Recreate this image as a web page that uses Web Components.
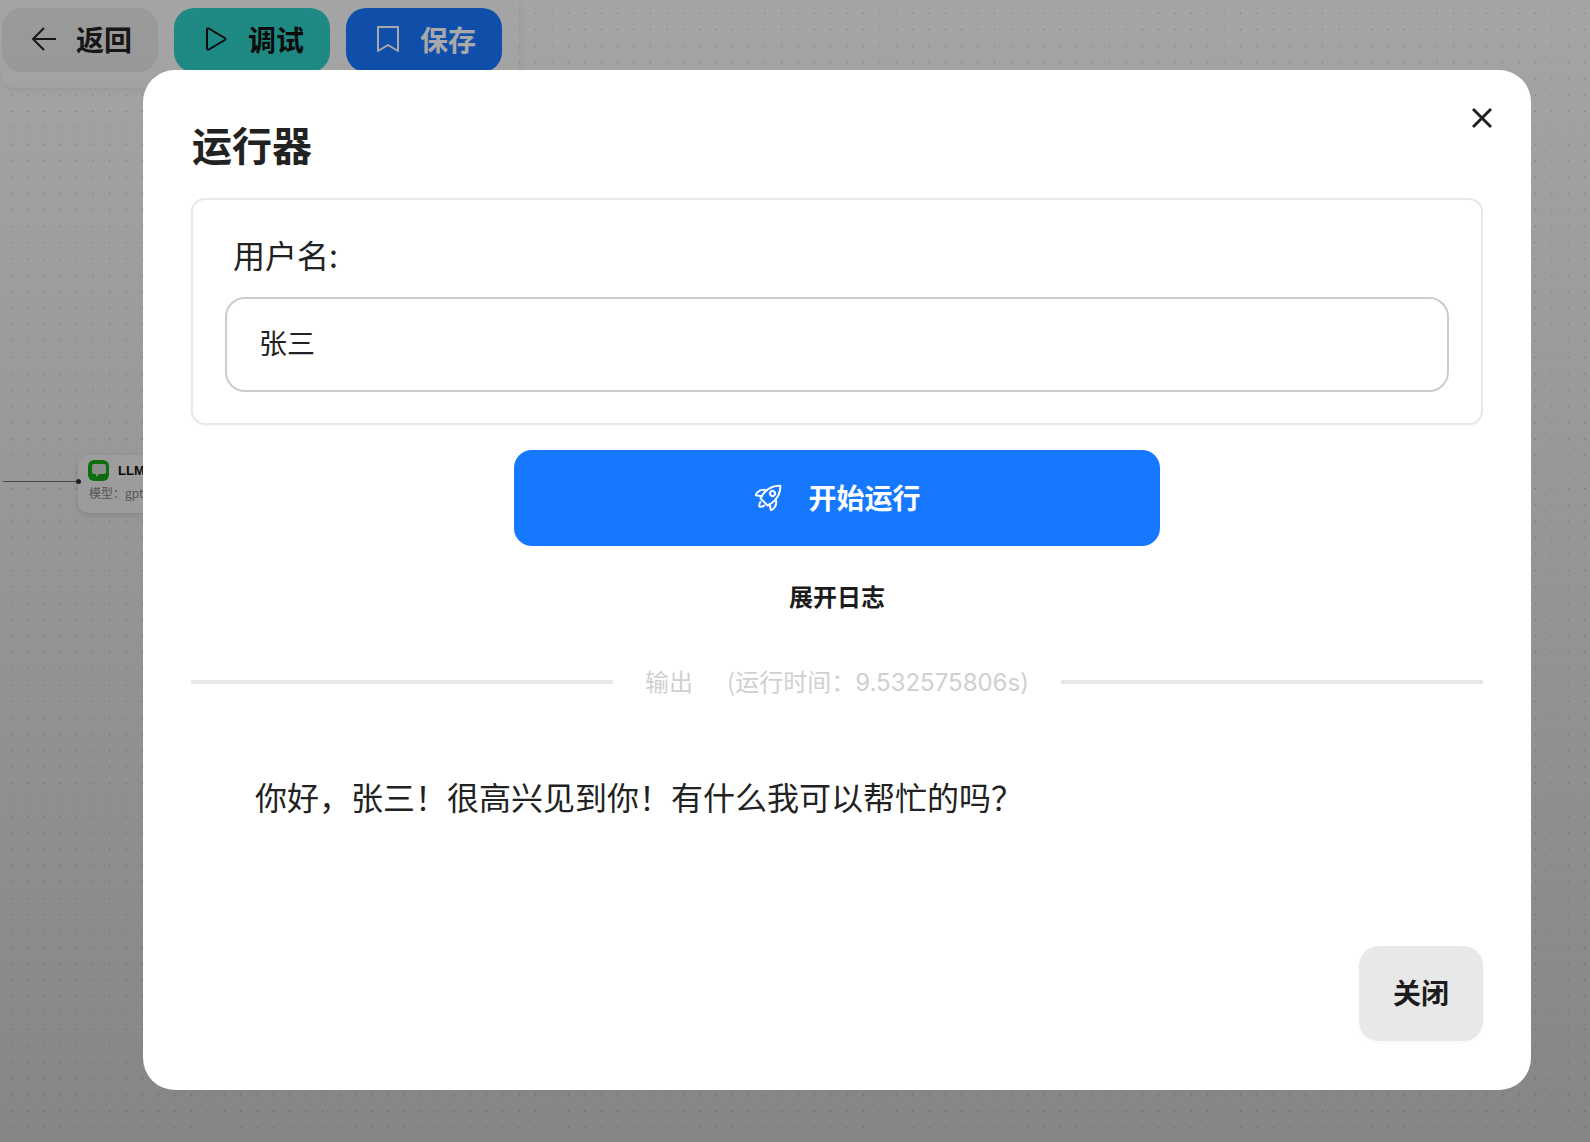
<!DOCTYPE html>
<html lang="zh">
<head>
<meta charset="utf-8">
<title>运行器</title>
<style>
  html, body { margin: 0; height: 100%; }
  body {
    font-family: "Noto Sans CJK SC", "Noto Sans", sans-serif;
    color: #222;
    overflow: hidden;
  }
</style>
</head>
<body>
<flow-page>
  <tool-button slot="tools" kind="back" icon="back">返回</tool-button>
  <tool-button slot="tools" kind="debug" icon="play">调试</tool-button>
  <tool-button slot="tools" kind="save" icon="mark">保存</tool-button>
  <flow-node slot="canvas"></flow-node>
  <run-modal slot="modal" heading="运行器">
    <field-card label="用户名:" value="张三"></field-card>
    <run-button>开始运行</run-button>
    <log-toggle>展开日志</log-toggle>
    <output-divider label="(运行时间：" time="9.532575806s)">输出</output-divider>
    <output-text>你好，张三！很高兴见到你！有什么我可以帮忙的吗？</output-text>
  </run-modal>
</flow-page>

<script>
const ICONS = {
  back: `<svg style="margin:0 -1px" width="26" height="26" viewBox="0 0 26 26" fill="none" stroke="currentColor" stroke-width="2"><path d="M25 13H2M13 2 2 13l11 11"/></svg>`,
  play: `<svg width="24" height="26" viewBox="0 0 24 26" fill="none" stroke="currentColor" stroke-width="2" stroke-linejoin="round"><path d="M3 3.500c0-1 1-1.500 1.800-1l16 9.500c.8.500.8 1.500 0 2l-16 9.500c-.8.500-1.800 0-1.800-1z"/></svg>`,
  mark: `<svg width="24" height="28" viewBox="0 0 24 28" fill="none" stroke="currentColor" stroke-width="2" stroke-linejoin="round"><path d="M2 2h20v24l-10-6-10 6z"/></svg>`
};

class FlowPage extends HTMLElement {
  constructor() {
    super();
    this.attachShadow({ mode: "open" });
    this.shadowRoot.innerHTML = `
      <style>
        :host {
          display: block;
          position: relative;
          width: 100%;
          height: 100%;
          overflow: hidden;
          background-color: #f7f7f8;
          background-image: radial-gradient(circle, #b4b4b4 0.7px, transparent 1px);
          background-size: 16.4px 16.4px;
          background-position: 3px 5px;
        }
        .toolbar {
          display: flex;
          gap: 16px;
          width: fit-content;
          padding: 8px 17px 16px 2px;
          background: #f7f7f7;
          border-radius: 0 0 16px 16px;
          box-shadow: 0 2px 8px rgba(0, 0, 0, .08);
        }
        .overlay {
          position: absolute;
          inset: 0;
          display: flex;
          padding: 70px 0 0 143px;
          background: linear-gradient(#00000055, #00000075);
        }
      </style>
      <div class="toolbar"><slot name="tools"></slot></div>
      <slot name="canvas"></slot>
      <div class="overlay"><slot name="modal"></slot></div>
    `;
  }
}

class ToolButton extends HTMLElement {
  constructor() {
    super();
    this.attachShadow({ mode: "open" });
    const kind = this.getAttribute("kind");
    const colors = {
      back: ["#e7e7e7", "#222"],
      debug: ["#2dcfc5", "#111"],
      save: ["#1677ff", "#fff"]
    }[kind];
    this.shadowRoot.innerHTML = `
      <style>
        :host {
          display: flex;
          align-items: center;
          gap: 20px;
          box-sizing: border-box;
          width: 156px;
          height: 64px;
          padding: 0 0 2px 30px;
          border-radius: 20px;
          font-size: 28px;
          font-weight: 700;
          background: ${colors[0]};
          color: ${colors[1]};
        }
        svg { display: block; }
      </style>
      ${ICONS[this.getAttribute("icon")]}
      <slot></slot>
    `;
  }
}

class FlowNode extends HTMLElement {
  constructor() {
    super();
    this.attachShadow({ mode: "open" });
    this.shadowRoot.innerHTML = `
      <style>
        :host { display: block; position: absolute; left: 3px; top: 455px; }
        .edge { position: absolute; left: 0; top: 26px; width: 75px; height: 1px; background: #777; }
        .dot { position: absolute; left: 73px; top: 24px; width: 5px; height: 5px; border-radius: 50%; background: #333; }
        .card {
          box-sizing: border-box;
          margin-left: 75px;
          width: 200px;
          height: 58px;
          padding: 5px 10px;
          background: #fff;
          border-radius: 10px;
          box-shadow: 0 2px 6px rgba(0, 0, 0, .12);
        }
        .title { display: flex; align-items: center; gap: 9px; font-size: 13px; font-weight: 700; color: #111; font-family: "Liberation Sans", sans-serif; }
        .badge { width: 21px; height: 21px; border-radius: 6px; background: #17b317; display: flex; align-items: center; justify-content: center; }
        .sub { margin: 3px 0 0 1px; font-size: 12px; color: #8a8a8a; }
      </style>
      <div class="edge"></div>
      <div class="dot"></div>
      <div class="card">
        <div class="title">
          <span class="badge"><svg width="14" height="13" viewBox="0 0 14 13"><path fill="#e4e4e4" d="M2 0h10a2 2 0 0 1 2 2v6a2 2 0 0 1-2 2H7l-3 3v-3H2a2 2 0 0 1-2-2V2a2 2 0 0 1 2-2z"/></svg></span>
          <span>LLM</span>
        </div>
        <div class="sub">模型：gpt</div>
      </div>
    `;
  }
}

class RunModal extends HTMLElement {
  constructor() {
    super();
    this.attachShadow({ mode: "open" });
    this.shadowRoot.innerHTML = `
      <style>
        :host {
          display: flex;
          flex-direction: column;
          position: relative;
          box-sizing: border-box;
          width: 1388px;
          height: 1020px;
          padding: 45px 48px 49px;
          background: #fff;
          border-radius: 32px;
        }
        h2 {
          margin: 0 0 25px 1px;
          font-size: 40px;
          line-height: 58px;
          font-weight: 700;
          color: #222;
        }
        .close {
          position: absolute;
          top: 37px;
          right: 38px;
          display: block;
        }
        .footer { margin-top: auto; display: flex; justify-content: flex-end; }
        .footer button {
          width: 124px;
          height: 95px;
          padding: 0 0 3px;
          border: 0;
          border-radius: 20px;
          background: #e7e8e8;
          color: #1c1c1c;
          font: 700 28px "Noto Sans CJK SC", sans-serif;
          box-shadow: 0 2px 4px rgba(0, 0, 0, .03);
        }
      </style>
      <svg class="close" width="22" height="22" viewBox="0 0 22 22" stroke="#222" stroke-width="3"><path d="M2 2l18 18M20 2 2 20"/></svg>
      <h2>${this.getAttribute("heading")}</h2>
      <slot></slot>
      <div class="footer"><button>关闭</button></div>
    `;
  }
}

class FieldCard extends HTMLElement {
  constructor() {
    super();
    this.attachShadow({ mode: "open" });
    this.shadowRoot.innerHTML = `
      <style>
        :host {
          display: block;
          box-sizing: border-box;
          height: 227px;
          padding: 30px 32px 0;
          border: 2px solid #e8e8e8;
          border-radius: 14px;
          box-shadow: 0 1px 2px rgba(0, 0, 0, .04);
        }
        label {
          display: block;
          margin: 0 0 19px 8px;
          font-size: 32px;
          line-height: 48px;
          color: #222;
        }
        input {
          display: block;
          box-sizing: border-box;
          width: 100%;
          height: 95px;
          padding: 0 32px 5px;
          border: 2px solid #ccc;
          border-radius: 20px;
          font: 28px "Noto Sans CJK SC", sans-serif;
          color: #222;
          background: #fff;
          outline: 0;
        }
      </style>
      <label>${this.getAttribute("label")}</label>
      <input value="${this.getAttribute("value")}">
    `;
  }
}

class RunButton extends HTMLElement {
  constructor() {
    super();
    this.attachShadow({ mode: "open" });
    this.shadowRoot.innerHTML = `
      <style>
        :host {
          display: flex;
          align-items: center;
          justify-content: center;
          gap: 23px;
          box-sizing: border-box;
          width: 646px;
          height: 96px;
          padding-bottom: 2px;
          margin: 25px auto 0;
          border-radius: 18px;
          background: #1677ff;
          color: #fff;
          font-size: 28px;
          font-weight: 700;
        }
        svg { display: block; }
      </style>
      <svg width="32" height="32" viewBox="0 0 32 32" fill="none" stroke="#fff" stroke-width="2" stroke-linejoin="round" stroke-linecap="round">
        <g transform="rotate(45 16 16)">
          <path d="M16 0c5 4.500 6.500 10 6.500 15 0 3-.5 5.500-1.500 8h-10c-1-2.500-1.500-5-1.500-8C9.500 10 11 4.500 16 0z"/>
          <circle cx="16" cy="11" r="2.500"/>
          <path d="M9.500 13c-3 1.500-5 4.500-5 8 0 1.500.5 2.500 1 3l5-3.500M22.500 13c3 1.500 5 4.500 5 8 0 1.500-.5 2.500-1 3l-5-3.500"/>
          <path d="M13.500 25.500c0 1.500 1 3 2.500 4 1.500-1 2.500-2.500 2.500-4"/>
        </g>
      </svg>
      <slot></slot>
    `;
  }
}

class LogToggle extends HTMLElement {
  constructor() {
    super();
    this.attachShadow({ mode: "open" });
    this.shadowRoot.innerHTML = `
      <style>
        :host {
          display: block;
          margin-top: 30px;
          text-align: center;
          font-size: 24px;
          line-height: 40px;
          font-weight: 700;
          color: #1c1c1c;
        }
      </style>
      <slot></slot>
    `;
  }
}

class OutputDivider extends HTMLElement {
  constructor() {
    super();
    this.attachShadow({ mode: "open" });
    this.shadowRoot.innerHTML = `
      <style>
        :host {
          display: flex;
          align-items: center;
          gap: 32px;
          margin-top: 45px;
          font-size: 24px;
          line-height: 40px;
          color: #d0d0d0;
        }
        i { flex: 1; height: 4px; background: #e8e8e8; }
        .time { margin-left: 34px; }
        .num { font-family: Inter, sans-serif; }
        div { display: flex; }
      </style>
      <i></i>
      <div><slot></slot><span class="time">${this.getAttribute("label")}<span class="num">${this.getAttribute("time")}</span></span></div>
      <i></i>
    `;
  }
}

class OutputText extends HTMLElement {
  constructor() {
    super();
    this.attachShadow({ mode: "open" });
    this.shadowRoot.innerHTML = `
      <style>
        :host {
          display: block;
          margin-top: 69px;
          padding-left: 64px;
          font-size: 32px;
          line-height: 48px;
          color: #222;
        }
      </style>
      <slot></slot>
    `;
  }
}

customElements.define("flow-page", FlowPage);
customElements.define("tool-button", ToolButton);
customElements.define("flow-node", FlowNode);
customElements.define("run-modal", RunModal);
customElements.define("field-card", FieldCard);
customElements.define("run-button", RunButton);
customElements.define("log-toggle", LogToggle);
customElements.define("output-divider", OutputDivider);
customElements.define("output-text", OutputText);
</script>
</body>
</html>
